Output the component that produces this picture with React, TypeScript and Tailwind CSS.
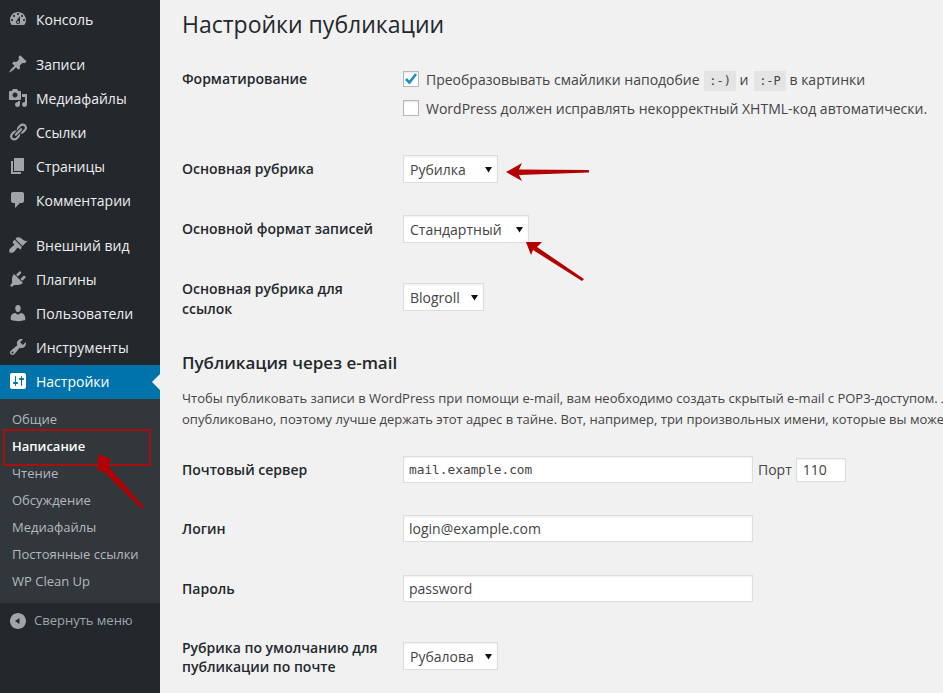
import type { ReactNode } from "react";

const icons: Record<string, string> = {
  dashboard:
    "M3.76 16h12.48c1.1-1.37 1.76-3.11 1.76-5 0-4.42-3.58-8-8-8s-8 3.58-8 8c0 1.89.66 3.63 1.76 5zM10 4c.55 0 1 .45 1 1s-.45 1-1 1-1-.45-1-1 .45-1 1-1zM6 6c.55 0 1 .45 1 1s-.45 1-1 1-1-.45-1-1 .45-1 1-1zm8 0c.55 0 1 .45 1 1s-.45 1-1 1-1-.45-1-1 .45-1 1-1zm-5.37 5.55L12 7v6c0 1.1-.9 2-2 2s-2-.9-2-2c0-.57.24-1.08.63-1.45zM4 10c.55 0 1 .45 1 1s-.45 1-1 1-1-.45-1-1 .45-1 1-1zm12 0c.55 0 1 .45 1 1s-.45 1-1 1-1-.45-1-1 .45-1 1-1zm-5 3c0-.55-.45-1-1-1s-1 .45-1 1 .45 1 1 1 1-.45 1-1z",
  post: "M10.44 3.02l1.82-1.82 6.36 6.35-1.83 1.82c-1.05-.68-2.48-.57-3.41.36l-.75.75c-.92.93-1.04 2.35-.35 3.41l-1.83 1.82-2.41-2.41-2.8 2.79c-.42.42-3.38 2.71-3.8 2.29s1.86-3.39 2.28-3.81l2.79-2.79L4.1 9.36l1.83-1.82c1.05.69 2.48.57 3.41-.36l.75-.75c.93-.92 1.04-2.35.35-3.41z",
  media:
    "M13 11V4c0-.55-.45-1-1-1h-1.67L9 1H5L3.67 3H2c-.55 0-1 .45-1 1v7c0 .55.45 1 1 1h10c.55 0 1-.45 1-1zM7 4.5c1.38 0 2.5 1.12 2.5 2.5S8.38 9.5 7 9.5 4.5 8.38 4.5 7 5.62 4.5 7 4.5zM14 6h5v10.5c0 1.38-1.12 2.5-2.5 2.5S14 17.88 14 16.5s1.12-2.5 2.5-2.5c.17 0 .34.02.5.05V9h-3V6zm-4 8.05V13h2v3.5c0 1.38-1.12 2.5-2.5 2.5S7 17.88 7 16.5 8.12 14 9.5 14c.17 0 .34.02.5.05z",
  links:
    "M17.74 2.76c1.68 1.69 1.68 4.41 0 6.1l-1.53 1.52c-1.12 1.12-2.7 1.47-4.14 1.09l2.62-2.61.76-.77.76-.76c.84-.84.84-2.2 0-3.04-.84-.85-2.2-.85-3.04 0l-.77.76-3.38 3.38c-.37-1.44-.02-3.02 1.1-4.14l1.52-1.53c1.69-1.68 4.42-1.68 6.1 0zM8.59 13.43l5.34-5.34c.42-.42.42-1.1 0-1.52-.44-.43-1.13-.39-1.53 0l-5.33 5.34c-.42.42-.42 1.1 0 1.52.44.43 1.13.39 1.52 0zm-.76 2.29l4.14-4.15c.38 1.44.03 3.02-1.09 4.14l-1.52 1.53c-1.69 1.68-4.41 1.68-6.1 0-1.68-1.68-1.68-4.42 0-6.1l1.53-1.52c1.12-1.12 2.7-1.47 4.14-1.1l-4.14 4.15c-.85.84-.85 2.2 0 3.05.84.84 2.2.84 3.04 0z",
  page: "M6 15V2h10v13H6zm-1 1h8v2H3V5h2v11z",
  comments:
    "M5 2h9c1.1 0 2 .9 2 2v7c0 1.1-.9 2-2 2h-2l-5 5v-5H5c-1.1 0-2-.9-2-2V4c0-1.1.9-2 2-2z",
  appearance:
    "M14.48 11.06L7.41 3.99l1.5-1.5c.5-.56 2.3-.47 3.51.32 1.21.8 1.43 1.28 2.91 2.1 1.18.64 2.45 1.26 4.45.85zm-.71.71L6.7 4.7 4.93 6.47c-.39.39-.39 1.02 0 1.41l1.06 1.06c.39.39.39 1.03 0 1.42-.6.6-1.43 1.11-2.21 1.69-.35.26-.7.53-1.01.84C1.43 13.71.96 15.12 1.5 17.5c2.38.54 3.79.07 5.13-1.27.31-.31.58-.66.84-1.01.58-.78 1.09-1.61 1.69-2.21.39-.39 1.03-.39 1.42 0l1.06 1.06c.39.39 1.02.39 1.41 0z",
  plugins:
    "M13.11 4.36L9.87 7.6 8 5.73l3.24-3.24c.35-.34 1.05-.2 1.56.32.52.51.66 1.21.31 1.55zm-8 1.77l.91-1.12 9.01 9.01-1.19.84c-.71.71-2.63 1.16-3.82 1.16H6.14L4.9 17.26c-.59.59-1.54.59-2.12 0-.59-.58-.59-1.53 0-2.12l1.24-1.24v-3.88c0-1.13.4-3.19 1.09-3.89zm7.26 3.97l3.24-3.24c.34-.35 1.04-.21 1.55.31.52.51.66 1.21.31 1.55l-3.24 3.25z",
  users:
    "M10 9.25c-2.27 0-2.73-3.44-2.73-3.44C7 4.02 7.82 2 9.97 2c2.16 0 2.98 2.02 2.71 3.81 0 0-.41 3.44-2.68 3.44zm0 2.57L12.72 10c2.39 0 4.52 2.33 4.52 4.53v2.49s-3.65 1.13-7.24 1.13c-3.65 0-7.24-1.13-7.24-1.13v-2.49c0-2.25 1.94-4.48 4.47-4.48z",
  tools:
    "M16.68 9.77c-1.34 1.34-3.3 1.67-4.95.99l-5.41 6.52c-.99.99-2.59.99-3.58 0s-.99-2.59 0-3.57l6.52-5.42c-.68-1.65-.35-3.61.99-4.95 1.28-1.28 3.12-1.62 4.72-1.06l-2.89 2.89 2.82 2.82 2.86-2.87c.53 1.58.18 3.39-1.08 4.65zM3.81 16.21c.4.39 1.04.39 1.43 0 .4-.4.4-1.04 0-1.43-.39-.4-1.03-.4-1.43 0-.39.39-.39 1.03 0 1.43z",
  settings:
    "M18 16V4c0-1.1-.9-2-2-2H4c-1.1 0-2 .9-2 2v12c0 1.1.9 2 2 2h12c1.1 0 2-.9 2-2zM8 11h1c.55 0 1 .45 1 1s-.45 1-1 1H8v1.5c0 .28-.22.5-.5.5s-.5-.22-.5-.5V13H6c-.55 0-1-.45-1-1s.45-1 1-1h1V5.5c0-.28.22-.5.5-.5s.5.22.5.5V11zm5-2h-1c-.55 0-1-.45-1-1s.45-1 1-1h1V5.5c0-.28.22-.5.5-.5s.5.22.5.5V7h1c.55 0 1 .45 1 1s-.45 1-1 1h-1v5.5c0 .28-.22.5-.5.5s-.5-.22-.5-.5V9z",
  collapse: "M10 18c4.4 0 8-3.6 8-8s-3.6-8-8-8-8 3.6-8 8 3.6 8 8 8zm1.5-5l-4.5-3 4.5-3v6z",
};

function Icon({ name, className }: { name: string; className: string }) {
  return (
    <svg viewBox="0 0 20 20" className={className} fill="currentColor">
      <path d={icons[name]} />
    </svg>
  );
}

function MenuItem({ icon, label, active }: { icon: string; label: string; active?: boolean }) {
  return (
    <div
      className={
        active
          ? "relative flex h-[34px] items-center bg-[#0073aa] pb-[2px] pl-2 text-[14px] text-white"
          : "flex h-[34px] items-center pb-[2px] pl-2 text-[14px] text-[#eeeeee]"
      }
    >
      <Icon name={icon} className={active ? "mr-2 h-5 w-5 text-white" : "mr-2 h-5 w-5 text-[#a0a5aa]"} />
      {label}
      {active && (
        <span className="absolute right-0 top-[9px] h-0 w-0 border-y-8 border-r-8 border-y-transparent border-r-[#f1f1f1]" />
      )}
    </div>
  );
}

function Select({ value, className }: { value: string; className: string }) {
  return (
    <div className={`flex h-[28px] items-center justify-between border border-[#dddddd] bg-white pl-[6px] pr-[5px] text-[14px] text-[#444444] shadow-[inset_0_1px_2px_rgba(0,0,0,0.07)] ${className}`}>
      <span>{value}</span>
      <svg viewBox="0 0 8 8" className="h-[7px] w-[7px]" fill="#111111">
        <path d="M0 1h8L4 7.500z" />
      </svg>
    </div>
  );
}

function Input({ value, className }: { value: string; className: string }) {
  return (
    <input
      readOnly
      value={value}
      className={`border border-[#dddddd] bg-white px-[5px] text-[#444444] shadow-[inset_0_1px_2px_rgba(0,0,0,0.07)] outline-none ${className}`}
    />
  );
}

function Row({ label, className, children }: { label: ReactNode; className: string; children: ReactNode }) {
  return (
    <div className={`flex ${className}`}>
      <div className="w-[221px] shrink-0 text-[14px] font-semibold leading-5 text-[#23282d]">{label}</div>
      {children}
    </div>
  );
}

function Check({ checked }: { checked?: boolean }) {
  return (
    <span className="relative mr-[7px] inline-block h-4 w-4 shrink-0 border border-[#b4b9be] bg-white shadow-[inset_0_1px_2px_rgba(0,0,0,0.1)]">
      {checked && (
        <svg viewBox="0 0 16 16" className="absolute -left-px -top-px h-4 w-4" fill="none" stroke="#1e8cbe" strokeWidth="2.6">
          <path d="M3 8l3.4 3.6L13 3" />
        </svg>
      )}
    </span>
  );
}

function Code({ children, className = "" }: { children: string; className?: string }) {
  return (
    <code className={`bg-[#e4e4e4] px-[5px] py-[3px] font-['DejaVu_Sans_Mono',monospace] text-[12px] leading-none ${className}`}>
      {children}
    </code>
  );
}

export default function App() {
  return (
    <div className="relative flex h-screen overflow-hidden bg-[#f1f1f1] font-['Open_Sans',sans-serif]">
      {/* Sidebar */}
      <aside className="w-[160px] shrink-0 bg-[#23282d] pt-[3px]">
        <MenuItem icon="dashboard" label="Консоль" />
        <div className="mt-[11px]">
          <MenuItem icon="post" label="Записи" />
          <MenuItem icon="media" label="Медиафайлы" />
          <MenuItem icon="links" label="Ссылки" />
          <MenuItem icon="page" label="Страницы" />
          <MenuItem icon="comments" label="Комментарии" />
        </div>
        <div className="mt-[11px]">
          <MenuItem icon="appearance" label="Внешний вид" />
          <MenuItem icon="plugins" label="Плагины" />
          <MenuItem icon="users" label="Пользователи" />
          <MenuItem icon="tools" label="Инструменты" />
          <MenuItem icon="settings" label="Настройки" active />
        </div>
        <div className="bg-[#32373c] pb-2 pt-[7px] text-[13px] text-[#b4b9be]">
          <div className="flex h-[27px] items-center pl-3">Общие</div>
          <div className="flex h-[27px] items-center pl-3 font-semibold text-white">Написание</div>
          <div className="flex h-[27px] items-center pl-3">Чтение</div>
          <div className="flex h-[27px] items-center pl-3">Обсуждение</div>
          <div className="flex h-[27px] items-center pl-3">Медиафайлы</div>
          <div className="flex h-[27px] items-center pl-3">Постоянные ссылки</div>
          <div className="flex h-[27px] items-center pl-3">WP Clean Up</div>
        </div>
        <div className="flex h-[34px] items-center pl-[8px] pt-[2px] text-[13px] text-[#a0a5aa]">
          <Icon name="collapse" className="mr-[6px] h-5 w-5" />
          Свернуть меню
        </div>
      </aside>

      {/* Settings form */}
      <main className="min-w-0 flex-1 overflow-hidden pl-[22px] text-[14px] text-[#444444]">
        <h1 className="mt-2 text-[23px] leading-8 text-[#23282d]">Настройки публикации</h1>

        <Row label="Форматирование" className="mt-[29px]">
          <div className="flex flex-col gap-[10px]">
            <label className="flex h-5 items-center whitespace-nowrap">
              <Check checked />
              <span>
                Преобразовывать смайлики наподобие <Code className="ml-px">:-)</Code> и <Code className="ml-[2px]">:-P</Code> в картинки
              </span>
            </label>
            <label className="-mt-px flex h-5 items-center whitespace-nowrap">
              <Check />
              WordPress должен исправлять некорректный XHTML-код автоматически.
            </label>
          </div>
        </Row>

        <Row label="Основная рубрика" className="mt-[37px] items-center">
          <Select value="Рубилка" className="w-[95px]" />
        </Row>
        <Row label="Основной формат записей" className="mt-[32px] items-center">
          <Select value="Стандартный" className="w-[126px]" />
        </Row>
        <Row label={<>Основная рубрика для<br />ссылок</>} className="mt-[36px]">
          <Select value="Blogroll" className="mt-1 w-[81px]" />
        </Row>

        <h2 className="mt-[32px] text-[17px] font-semibold leading-6 text-[#23282d]">Публикация через e-mail</h2>
        <p className="mt-[13px] whitespace-nowrap text-[13px] leading-[21px]">
          Чтобы публиковать записи в WordPress при помощи e-mail, вам необходимо создать скрытый e-mail с POP3-доступом. Любая
          <br />
          опубликовано, поэтому лучше держать этот адрес в тайне. Вот, например, три произвольных имени, которые вы можете
        </p>

        <Row label="Почтовый сервер" className="mt-[26px] items-center">
          <Input value="mail.example.com" className="h-[27px] w-[350px] font-['DejaVu_Sans_Mono',monospace] text-[12.8px]" />
          <span className="ml-[5px] mr-1">Порт</span>
          <Input value="110" className="h-[24px] w-[50px] pl-[6px] text-[14px]" />
        </Row>
        <Row label="Логин" className="mt-[32px] items-center">
          <Input value="login@example.com" className="h-[27px] w-[350px] text-[14px]" />
        </Row>
        <Row label="Пароль" className="mt-[33px] items-center">
          <Input value="password" className="h-[27px] w-[350px] text-[14px]" />
        </Row>
        <Row label={<div className="leading-[19px]">Рубрика по умолчанию для<br />публикации по почте</div>} className="mt-[36px]">
          <Select value="Рубалова" className="mt-1 w-[95px]" />
        </Row>
      </main>

      {/* Red annotations drawn over the screenshot */}
      <svg className="pointer-events-none absolute left-0 top-0 h-[693px] w-[943px]" viewBox="0 0 943 693">
        <rect x="4" y="430" width="146" height="35" fill="none" stroke="#a80f0f" strokeWidth="2" />
        <path d="M506 172L522 163L519 169.500L589 170L589 172.500L519 175L522 181z" fill="#b30000" />
        <path d="M526 242L542 242L537 247L584 279L582 281L533 250L531 255z" fill="#b30000" />
        <path d="M98 454L112 460L107 465L144 507L142 509L102 470L98 472z" fill="#b30000" />
      </svg>
    </div>
  );
}
